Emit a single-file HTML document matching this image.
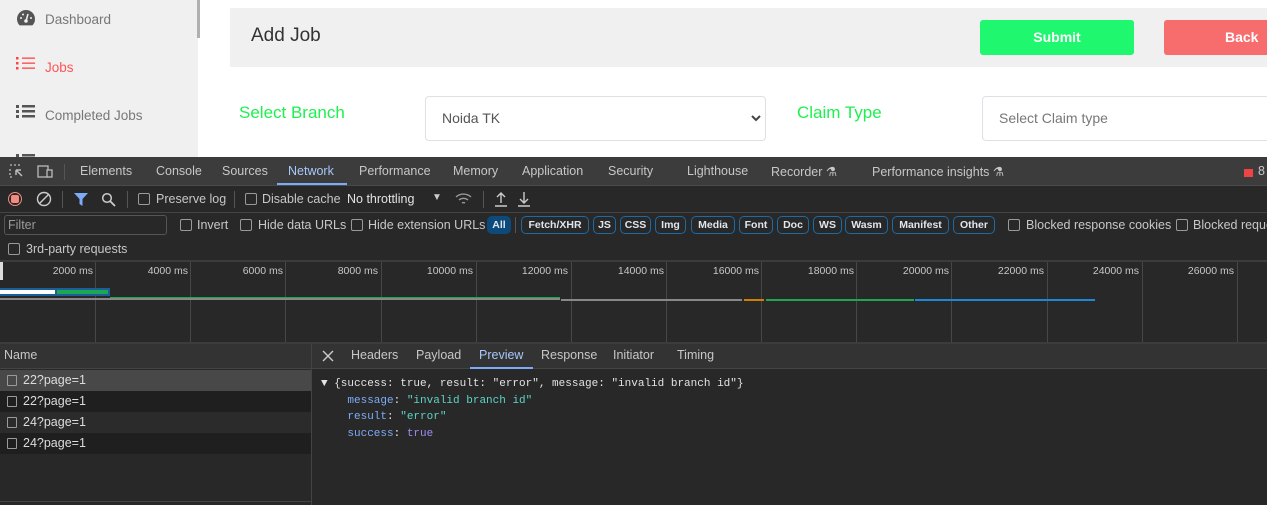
<!DOCTYPE html>
<html><head><meta charset="utf-8"><style>
*{margin:0;padding:0;box-sizing:border-box}
body{width:1267px;height:505px;overflow:hidden;background:#fff;position:relative;font-family:"Liberation Sans",sans-serif}
.a{position:absolute;white-space:nowrap}
.dt{font-size:12.5px;color:#c7c7c7}
.cb{position:absolute;width:12px;height:12px;border:1px solid #9a9a9a;border-radius:2px}
.pill{position:absolute;top:216px;height:18px;border:1px solid #1c6aa6;border-radius:5px;color:#dfe6ee;font-size:10.5px;font-weight:bold;line-height:16px;text-align:center;overflow:hidden}
.vl{position:absolute;top:262px;width:1px;height:80px;background:#474747}
.tl{position:absolute;top:265px;font-size:10.5px;color:#c7c7c7;text-align:right;width:80px}
.row{position:absolute;left:0;width:311px;height:21px;font-size:12.5px;color:#dcdcdc;line-height:21px;padding-left:23px}
.row i{position:absolute;left:7px;top:5px;width:10px;height:11px;border:1px solid #9a9a9a;border-radius:1px}
</style></head><body>
<div class="a" style="left:0;top:0;width:198px;height:157px;background:#f0f0f0"></div>
<div class="a" style="left:197px;top:0;width:3px;height:38px;background:#b0b0b0"></div>
<svg class="a" style="left:16px;top:9px" width="20" height="17" viewBox="0 0 20 17"><path d="M10 1A9 9 0 0 0 1 10c0 2.5 1 4.8 2.6 6.4h12.8A9 9 0 0 0 19 10 9 9 0 0 0 10 1z" fill="#555"/><circle cx="10" cy="12" r="1.8" fill="#f0f0f0"/><path d="M10 12l2-7" stroke="#f0f0f0" stroke-width="1.5"/><circle cx="5" cy="9" r="1" fill="#f0f0f0"/><circle cx="15" cy="9" r="1" fill="#f0f0f0"/><circle cx="7" cy="5.5" r="1" fill="#f0f0f0"/></svg>
<div class="a" style="left:45px;top:12px;font-size:13.5px;color:#777">Dashboard</div>
<svg class="a" style="left:16px;top:56px" width="20" height="14"><g fill="#f44"><rect x="0" y="1" width="2.5" height="2.5"/><rect x="0" y="6" width="2.5" height="2.5"/><rect x="0" y="11" width="2.5" height="2.5"/><rect x="6" y="1.5" width="13" height="1.3"/><rect x="6" y="6.5" width="13" height="1.3"/><rect x="6" y="11.5" width="13" height="1.3"/></g></svg>
<div class="a" style="left:45px;top:60px;font-size:13.5px;color:#f55">Jobs</div>
<svg class="a" style="left:16px;top:104px" width="20" height="14"><g fill="#555"><rect x="0" y="1" width="3" height="3"/><rect x="0" y="6" width="3" height="3"/><rect x="0" y="11" width="3" height="3"/><rect x="6" y="1" width="13" height="2.5"/><rect x="6" y="6" width="13" height="2.5"/><rect x="6" y="11" width="13" height="2.5"/></g></svg>
<div class="a" style="left:45px;top:108px;font-size:13.5px;color:#777">Completed Jobs</div>
<svg class="a" style="left:16px;top:152px" width="20" height="5"><g fill="#555"><rect x="0" y="2" width="3" height="3"/><rect x="6" y="2" width="13" height="2.5"/></g></svg>
<div class="a" style="left:230px;top:8px;width:1037px;height:59px;background:#f0f0f0"></div>
<div class="a" style="left:251px;top:25px;font-size:19px;color:#333">Add Job</div>
<div class="a" style="left:980px;top:20px;width:154px;height:35px;background:#1ff76e;border-radius:3px;color:#fff;font-weight:bold;font-size:14px;text-align:center;line-height:35px">Submit</div>
<div class="a" style="left:1164px;top:20px;width:110px;height:35px;background:#f76d6d;border-radius:3px;color:#fff;font-weight:bold;font-size:14px;line-height:35px;padding-left:61px">Back</div>
<div class="a" style="left:239px;top:103px;font-size:17px;color:#1df04f">Select Branch</div>
<div class="a" style="left:425px;top:96px;width:341px;height:45px;border:1px solid #dde0e4;border-radius:4px;font-size:14px;color:#555;line-height:43px;padding-left:16px">Noida TK</div>
<svg class="a" style="left:751px;top:114px" width="10" height="8"><path d="M1 2l4 4 4-4" stroke="#444" stroke-width="2" fill="none"/></svg>
<div class="a" style="left:797px;top:103px;font-size:17px;color:#1df04f">Claim Type</div>
<div class="a" style="left:982px;top:96px;width:300px;height:45px;border:1px solid #dde0e4;border-radius:4px;font-size:14px;color:#777;line-height:43px;padding-left:16px">Select Claim type</div>
<div class="a" style="left:0;top:157px;width:1267px;height:348px;background:#282828"></div>
<div class="a" style="left:0;top:157px;width:1267px;height:29px;background:#3c3c3c;border-bottom:1px solid #4a4a4a"></div>
<svg class="a" style="left:9px;top:164px" width="16" height="16"><path d="M1 1h2M5 1h2M9 1h2M1 5v2M1 9v2M1 13h2" stroke="#bbb" stroke-width="1.3"/><path d="M7 6l6 6M7 6v5M7 6h5" stroke="#bbb" stroke-width="1.5" fill="none"/></svg>
<svg class="a" style="left:37px;top:164px" width="17" height="15"><rect x="1" y="2" width="10" height="11" fill="none" stroke="#bbb" stroke-width="1.3"/><rect x="10" y="6" width="5" height="7" fill="#3c3c3c" stroke="#bbb" stroke-width="1.3"/></svg>
<div class="a" style="left:64px;top:164px;width:1px;height:16px;background:#555"></div>
<div class="a dt" style="left:80px;top:164px">Elements</div>
<div class="a dt" style="left:156px;top:164px">Console</div>
<div class="a dt" style="left:222px;top:164px">Sources</div>
<div class="a dt" style="left:288px;top:164px;color:#a8c7fa">Network</div>
<div class="a" style="left:277px;top:183px;width:70px;height:2px;background:#7cacf8"></div>
<div class="a dt" style="left:359px;top:164px">Performance</div>
<div class="a dt" style="left:453px;top:164px">Memory</div>
<div class="a dt" style="left:522px;top:164px">Application</div>
<div class="a dt" style="left:608px;top:164px">Security</div>
<div class="a dt" style="left:687px;top:164px">Lighthouse</div>
<div class="a dt" style="left:771px;top:164px">Recorder ⚗</div>
<div class="a dt" style="left:872px;top:164px">Performance insights ⚗</div>
<div class="a" style="left:1244px;top:169px;width:9px;height:8px;background:#e44"></div>
<div class="a dt" style="left:1258px;top:164px">8</div>
<div class="a" style="left:0;top:186px;width:1267px;height:27px;border-bottom:1px solid #444"></div>
<div class="a" style="left:8px;top:192px;width:14px;height:14px;border-radius:50%;border:1.5px solid #f28b82"></div>
<div class="a" style="left:11px;top:195px;width:8px;height:8px;border-radius:2px;background:#f28b82"></div>
<svg class="a" style="left:36px;top:191px" width="16" height="16"><circle cx="8" cy="8" r="6.5" fill="none" stroke="#ccc" stroke-width="1.4"/><path d="M3.5 12.5l9-9" stroke="#ccc" stroke-width="1.4"/></svg>
<div class="a" style="left:62px;top:191px;width:1px;height:17px;background:#555"></div>
<svg class="a" style="left:74px;top:193px" width="14" height="13"><path d="M0 0h14L8.5 6v7L5.5 11V6z" fill="#7cacf8"/></svg>
<svg class="a" style="left:101px;top:192px" width="15" height="15"><circle cx="6" cy="6" r="4.3" fill="none" stroke="#ccc" stroke-width="1.5"/><path d="M9 9l5 5" stroke="#ccc" stroke-width="1.8"/></svg>
<div class="a" style="left:127px;top:191px;width:1px;height:17px;background:#555"></div>
<div class="cb" style="left:138px;top:193px"></div><div class="a dt" style="left:156px;top:192px">Preserve log</div>
<div class="a" style="left:234px;top:191px;width:1px;height:17px;background:#555"></div>
<div class="cb" style="left:245px;top:193px"></div><div class="a dt" style="left:262px;top:192px">Disable cache</div>
<div class="a dt" style="left:347px;top:192px;color:#e3e3e3">No throttling</div>
<div class="a" style="left:432px;top:192px;font-size:10px;color:#ccc">▼</div>
<svg class="a" style="left:455px;top:192px" width="18" height="14"><path d="M1 5a11 11 0 0 1 15 0M4 8a7 7 0 0 1 9 0M7 11a3 3 0 0 1 3 0" stroke="#999" stroke-width="1.4" fill="none"/></svg>
<div class="a" style="left:483px;top:191px;width:1px;height:17px;background:#555"></div>
<svg class="a" style="left:494px;top:191px" width="14" height="16"><path d="M7 12V2M3 6l4-4 4 4M1 15h12" stroke="#ccc" stroke-width="1.4" fill="none"/></svg>
<svg class="a" style="left:517px;top:191px" width="14" height="16"><path d="M7 1v11M3 8l4 4 4-4M1 15h12" stroke="#ccc" stroke-width="1.4" fill="none"/></svg>
<div class="a" style="left:4px;top:215px;width:163px;height:20px;border:1px solid #555;border-radius:3px;font-size:12.5px;color:#9a9a9a;padding-left:3px;line-height:18px">Filter</div>
<div class="cb" style="left:180px;top:219px"></div><div class="a dt" style="left:197px;top:218px">Invert</div>
<div class="cb" style="left:240px;top:219px"></div><div class="a dt" style="left:258px;top:218px">Hide data URLs</div>
<div class="cb" style="left:351px;top:219px"></div><div class="a dt" style="left:368px;top:218px">Hide extension URLs</div>
<div class="pill" style="left:487px;width:24px;background:#0b4a7a;border-color:#0b4a7a">All</div>
<div class="a" style="left:515px;top:217px;width:1px;height:16px;background:#555"></div>
<div class="pill" style="left:521px;width:68px">Fetch/XHR</div>
<div class="pill" style="left:593px;width:23px">JS</div>
<div class="pill" style="left:620px;width:31px">CSS</div>
<div class="pill" style="left:655px;width:31px">Img</div>
<div class="pill" style="left:691px;width:44px">Media</div>
<div class="pill" style="left:739px;width:34px">Font</div>
<div class="pill" style="left:777px;width:32px">Doc</div>
<div class="pill" style="left:813px;width:29px">WS</div>
<div class="pill" style="left:845px;width:43px">Wasm</div>
<div class="pill" style="left:892px;width:57px">Manifest</div>
<div class="pill" style="left:953px;width:42px">Other</div>
<div class="cb" style="left:1008px;top:219px"></div><div class="a dt" style="left:1026px;top:218px">Blocked response cookies</div>
<div class="cb" style="left:1176px;top:219px"></div><div class="a dt" style="left:1193px;top:218px">Blocked reque</div>
<div class="cb" style="left:8px;top:243px"></div><div class="a dt" style="left:26px;top:242px">3rd-party requests</div>
<div class="a" style="left:0;top:260px;width:1267px;height:2px;background:#3c3c3c"></div>
<div class="vl" style="left:95px"></div><div class="vl" style="left:190px"></div><div class="vl" style="left:285px"></div><div class="vl" style="left:381px"></div><div class="vl" style="left:476px"></div><div class="vl" style="left:571px"></div><div class="vl" style="left:666px"></div><div class="vl" style="left:761px"></div><div class="vl" style="left:856px"></div><div class="vl" style="left:951px"></div><div class="vl" style="left:1047px"></div><div class="vl" style="left:1142px"></div><div class="vl" style="left:1237px"></div>
<div class="a" style="left:0;top:262px;width:3px;height:18px;background:#ddd"></div>
<div class="tl" style="left:13px">2000 ms</div><div class="tl" style="left:108px">4000 ms</div><div class="tl" style="left:203px">6000 ms</div><div class="tl" style="left:298px">8000 ms</div><div class="tl" style="left:393px">10000 ms</div><div class="tl" style="left:488px">12000 ms</div><div class="tl" style="left:584px">14000 ms</div><div class="tl" style="left:679px">16000 ms</div><div class="tl" style="left:774px">18000 ms</div><div class="tl" style="left:869px">20000 ms</div><div class="tl" style="left:964px">22000 ms</div><div class="tl" style="left:1059px">24000 ms</div><div class="tl" style="left:1154px">26000 ms</div>
<div class="a" style="left:0;top:288px;width:110px;height:8px;background:#1a5f98"></div>
<div class="a" style="left:0;top:290px;width:55px;height:4px;background:#fff"></div>
<div class="a" style="left:57px;top:290px;width:51px;height:4px;background:#1fa655"></div>
<div class="a" style="left:110px;top:297px;width:450px;height:3px;background:#1fa655"></div>
<div class="a" style="left:0;top:298px;width:560px;height:2px;background:#888"></div>
<div class="a" style="left:561px;top:299px;width:181px;height:2px;background:#888"></div>
<div class="a" style="left:744px;top:299px;width:20px;height:2px;background:#d08000"></div>
<div class="a" style="left:766px;top:299px;width:148px;height:2px;background:#1fa655"></div>
<div class="a" style="left:915px;top:299px;width:180px;height:2px;background:#1a8ad6"></div>
<div class="a" style="left:0;top:342px;width:1267px;height:2px;background:#3c3c3c"></div>
<div class="a" style="left:0;top:344px;width:311px;height:25px;background:#333;border-bottom:1px solid #444"></div>
<div class="a dt" style="left:4px;top:348px">Name</div>
<div class="row" style="top:370px;background:#484848"><i></i>22?page=1</div>
<div class="row" style="top:391px;background:#1f1f1f"><i></i>22?page=1</div>
<div class="row" style="top:412px;background:#2b2b2b"><i></i>24?page=1</div>
<div class="row" style="top:433px;background:#1f1f1f"><i></i>24?page=1</div>
<div class="a" style="left:0;top:501px;width:311px;height:1px;background:#444"></div>
<div class="a" style="left:311px;top:344px;width:1px;height:161px;background:#444"></div>
<div class="a" style="left:312px;top:344px;width:955px;height:25px;background:#333;border-bottom:1px solid #444"></div>
<svg class="a" style="left:322px;top:350px" width="12" height="12"><path d="M1 1l10 10M11 1L1 11" stroke="#ccc" stroke-width="1.4"/></svg>
<div class="a dt" style="left:351px;top:348px">Headers</div>
<div class="a dt" style="left:416px;top:348px">Payload</div>
<div class="a dt" style="left:479px;top:348px;color:#a8c7fa">Preview</div>
<div class="a" style="left:470px;top:367px;width:63px;height:2px;background:#7cacf8"></div>
<div class="a dt" style="left:541px;top:348px">Response</div>
<div class="a dt" style="left:613px;top:348px">Initiator</div>
<div class="a dt" style="left:677px;top:348px">Timing</div>
<div class="a" style="left:321px;top:376px;font-family:'Liberation Mono',monospace;font-size:11px;color:#e3e3e3;line-height:16.5px">▼ {success: true, result: "error", message: "invalid branch id"}<br>
&nbsp;&nbsp;&nbsp;&nbsp;<span style="color:#7cacf8">message</span>: <span style="color:#5cd5c4">"invalid branch id"</span><br>
&nbsp;&nbsp;&nbsp;&nbsp;<span style="color:#7cacf8">result</span>: <span style="color:#5cd5c4">"error"</span><br>
&nbsp;&nbsp;&nbsp;&nbsp;<span style="color:#7cacf8">success</span>: <span style="color:#9d8cf0">true</span></div>
</body></html>
